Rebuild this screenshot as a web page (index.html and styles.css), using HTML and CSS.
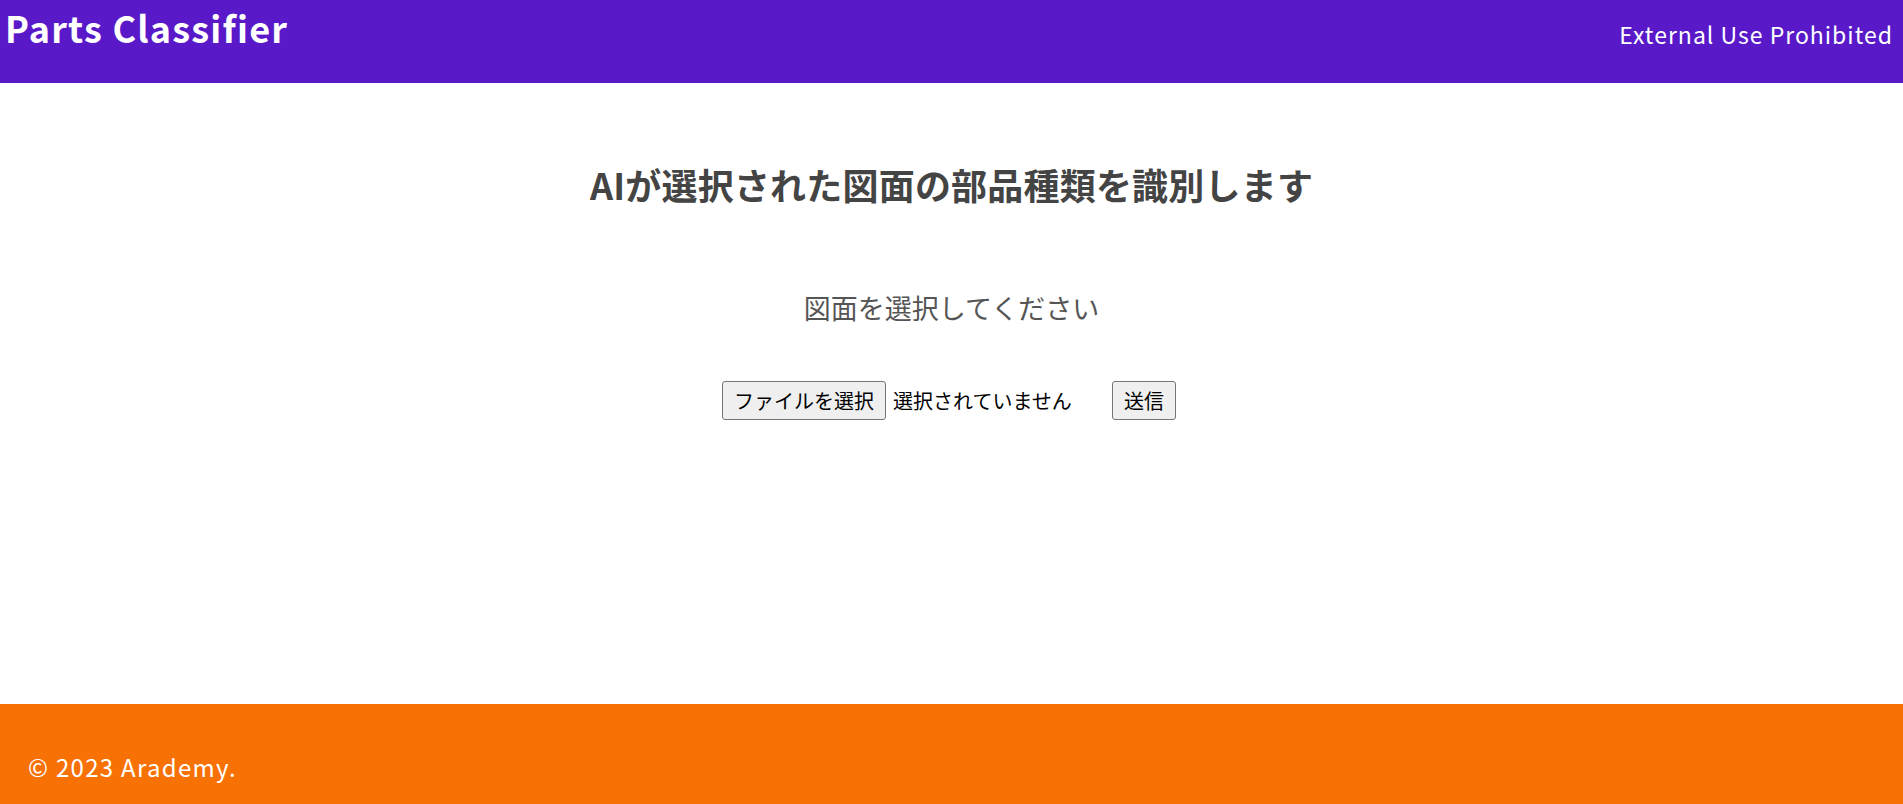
FILE: index.html
```html
<!DOCTYPE html>
<html lang="ja">
<head>
<meta charset="utf-8">
<title>Parts Classifier</title>
<link rel="stylesheet" href="styles.css">
</head>
<body>
<div class="page">
  <header class="topbar">
    <h1 class="brand">Parts Classifier</h1>
    <div class="notice">External Use Prohibited</div>
  </header>
  <main class="content">
    <h2 class="headline">AIが選択された図面の部品種類を識別します</h2>
    <p class="prompt">図面を選択してください</p>
    <form class="upload">
      <div class="file-field">
        <span class="btn btn-file">ファイルを選択</span>
        <span class="file-name">選択されていません</span>
      </div>
      <span class="btn btn-submit">送信</span>
    </form>
  </main>
  <footer class="bottombar">
    <p class="copy">© 2023 Arademy.</p>
  </footer>
</div>
</body>
</html>
```

FILE: styles.css
```css
* { box-sizing: border-box; }
html, body { margin: 0; padding: 0; }
body {
  font-family: "Noto Sans CJK JP", "Noto Sans", sans-serif;
  color: #333;
  background: #fff;
}
.page {
  height: 804px;
  display: flex;
  flex-direction: column;
}
.topbar {
  height: 83px;
  background: #5919c9;
  color: #fff;
  display: flex;
  justify-content: space-between;
  align-items: flex-start;
  padding: 0 10px 0 5px;
  flex: none;
}
.brand {
  margin: 0;
  font-size: 36px;
  font-weight: 700;
  line-height: 1;
  padding-top: 9px;
  letter-spacing: 1.2px;
}
.notice {
  font-size: 23px;
  line-height: 1;
  padding-top: 23px;
  letter-spacing: 1px;
}
.content {
  flex: 1;
  display: flex;
  flex-direction: column;
  align-items: center;
}
.headline {
  margin: 0;
  margin-top: 81px;
  font-size: 36px;
  font-weight: 700;
  color: #444;
  line-height: 40px;
  letter-spacing: 0.2px;
}
.prompt {
  margin: 0;
  margin-top: 89px;
  font-size: 27px;
  color: #555;
  line-height: 30px;
}
.upload {
  margin-top: 58px;
  margin-right: 5px;
  display: flex;
  align-items: center;
}
.file-field {
  display: flex;
  align-items: center;
  width: 390px;
}
.btn {
  display: inline-flex;
  align-items: center;
  justify-content: center;
  height: 39px;
  border: 1px solid #767676;
  border-radius: 3px;
  background: #efefef;
  color: #000;
  font-size: 20px;
}
.btn-file { width: 164px; }
.btn-submit { width: 64px; }
.file-name {
  margin-left: 7px;
  font-size: 20px;
  color: #000;
}
.bottombar {
  height: 100px;
  background: #f87104;
  color: #fff;
  flex: none;
  display: flex;
  align-items: flex-end;
  padding: 0 0 25px 28px;
}
.copy {
  margin: 0;
  font-size: 24px;
  line-height: 1;
  letter-spacing: 1.3px;
}
```
